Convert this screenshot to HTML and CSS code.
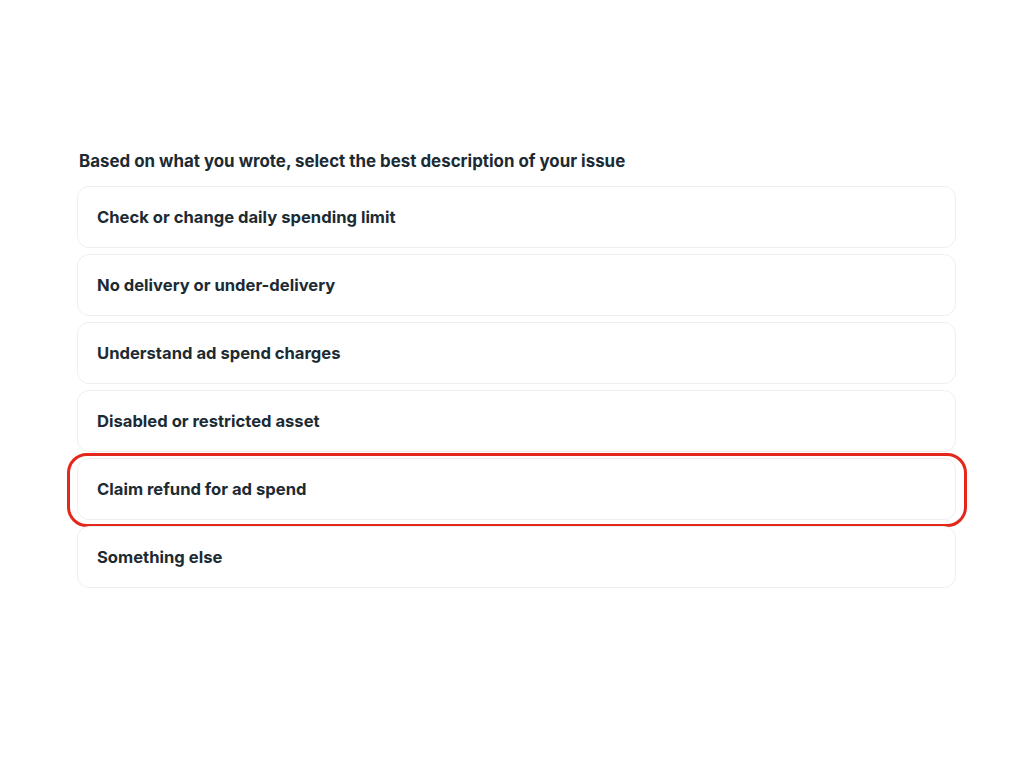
FILE: index.html
```html
<!DOCTYPE html>
<html lang="en">
<head>
<meta charset="utf-8">
<link rel="stylesheet" href="styles.css">
</head>
<body>
<main class="page">
  <h2 class="prompt">Based on what you wrote, select the best description of your issue</h2>
  <ul class="options">
    <li class="option">Check or change daily spending limit</li>
    <li class="option">No delivery or under-delivery</li>
    <li class="option">Understand ad spend charges</li>
    <li class="option">Disabled or restricted asset</li>
    <li class="option highlighted">Claim refund for ad spend<span class="ring"></span></li>
    <li class="option">Something else</li>
  </ul>
</main>
</body>
</html>
```
FILE: styles.css
```css
html, body {
  margin: 0;
  padding: 0;
  background: #ffffff;
}
body {
  font-family: "Inter", "Open Sans", sans-serif;
  color: #1c2b33;
}
.page {
  padding: 150px 68px 0 77px;
}
.prompt {
  margin: 0 0 14px 2px;
  font-size: 16.9px;
  font-weight: 700;
  line-height: 22px;
  letter-spacing: 0;
  color: #1c2b33;
}
.options {
  list-style: none;
  margin: 0;
  padding: 0;
  display: flex;
  flex-direction: column;
  gap: 6px;
}
.option {
  position: relative;
  height: 62px;
  box-sizing: border-box;
  border: 1.5px solid #efeff0;
  border-radius: 12px;
  padding: 0 19px;
  display: flex;
  align-items: center;
  font-size: 16.6px;
  font-weight: 700;
  letter-spacing: 0;
  color: #1c2b33;
}
.ring {
  position: absolute;
  left: -11px;
  right: -12px;
  top: -6px;
  bottom: -8px;
  border: 3px solid #e3271b;
  border-radius: 20px;
  pointer-events: none;
}
```
